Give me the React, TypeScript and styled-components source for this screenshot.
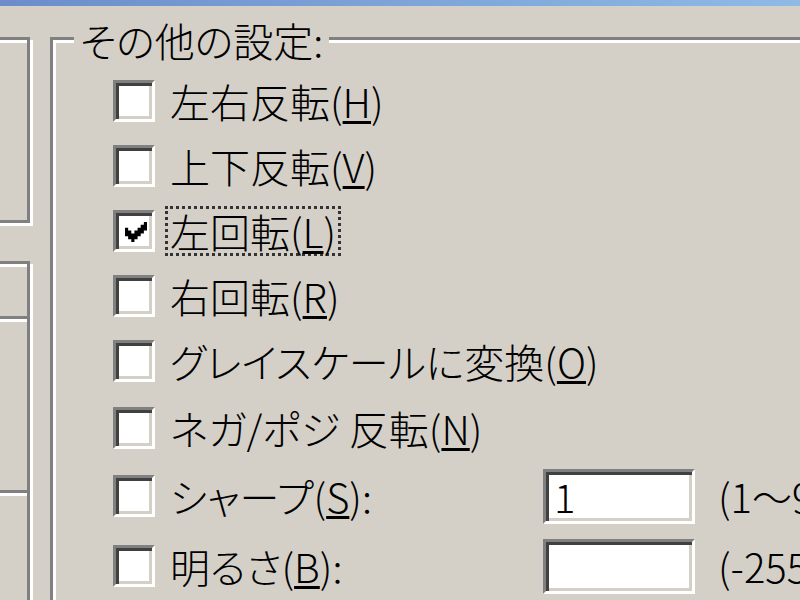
import React from "react";
import styled, { createGlobalStyle } from "styled-components";

const GlobalStyle = createGlobalStyle`
  html, body {
    margin: 0;
    padding: 0;
    background: #d4d0c8;
    overflow: hidden;
  }
  body {
    font-family: "Noto Sans CJK JP", "Noto Sans", sans-serif;
    font-weight: 300;
    font-feature-settings: "palt";
    color: #000;
  }
`;

const Window = styled.div`
  width: 800px;
  height: 600px;
  overflow: hidden;
  background: #d4d0c8;
  display: flex;
  flex-direction: column;
`;

const TitleBar = styled.div`
  height: 6px;
  flex-shrink: 0;
  background: linear-gradient(to right, #6c8dca, #8fbae6);
`;

const Body = styled.div`
  display: flex;
  gap: 17px;
  padding-top: 31px;
  flex: 1;
  min-height: 0;
`;

const LeftColumn = styled.div`
  width: 45px;
  margin-left: -12px;
  flex-shrink: 0;
  display: flex;
  flex-direction: column;
  gap: 38px;
`;

// classic etched frame: grey rect with a white rect 1px down-right
const Etched = styled.div<{ $h: number }>`
  box-sizing: border-box;
  width: 42px;
  height: ${p => p.$h}px;
  flex-shrink: 0;
  border: 3px solid #808080;
  box-shadow: inset 3px 3px 0 #fff, 3px 3px 0 #fff;
`;

const Separator = styled.div<{ $top: number }>`
  height: 3px;
  margin-top: ${p => p.$top}px;
  background: #808080;
  border-bottom: 3px solid #fff;
`;

const GroupBox = styled.div`
  position: relative;
  box-sizing: border-box;
  width: 800px;
  height: 700px;
  flex-shrink: 0;
  border: 3px solid #808080;
  box-shadow: inset 3px 3px 0 #fff;
  padding: 27px 0 0 60px;
`;

const Legend = styled.div`
  position: absolute;
  top: -20px;
  left: 21px;
  padding: 0 6px;
  background: #d4d0c8;
  font-size: 40px;
  line-height: 40px;
  white-space: nowrap;
`;

const Row = styled.div<{ $h: number }>`
  display: flex;
  align-items: center;
  height: ${p => p.$h}px;
`;

const CheckBox = styled.div`
  box-sizing: border-box;
  width: 42px;
  height: 42px;
  flex-shrink: 0;
  background: #fff;
  border: 3px solid;
  border-color: #808080 #fff #fff #808080;
  box-shadow: inset 3px 3px 0 #404040, inset -3px -3px 0 #d4d0c8;
  display: flex;
  align-items: center;
  justify-content: center;
  padding: 3px 0 0 3px;
`;

const Label = styled.div<{ $focused?: boolean; $width?: number }>`
  box-sizing: border-box;
  margin-left: 10px;
  padding: 2px 2px;
  border: 3px ${p => (p.$focused ? "dotted #333" : "solid transparent")};
  font-size: 40px;
  line-height: 40px;
  white-space: nowrap;
  flex-shrink: 0;
  width: ${p => (p.$width ? `${p.$width}px` : "auto")};
`;

const Key = styled.span`
  text-decoration: underline;
  text-decoration-thickness: 3px;
  text-underline-offset: 3px;
`;

const Edit = styled.div`
  box-sizing: border-box;
  width: 152px;
  height: 55px;
  flex-shrink: 0;
  background: #fff;
  border: 3px solid;
  border-color: #808080 #fff #fff #808080;
  box-shadow: inset 3px 3px 0 #404040, inset -3px -3px 0 #d4d0c8;
  padding: 0 8px;
  font-size: 40px;
  line-height: 49px;
`;

const Hint = styled.div`
  margin-left: 23px;
  font-size: 40px;
  line-height: 40px;
  white-space: nowrap;
`;

function Check() {
  return (
    <svg width="22" height="20" viewBox="0 0 7 7" preserveAspectRatio="none">
      <polygon
        fill="#000"
        points="6,0 7,0 7,3 6,3 6,4 5,4 5,5 4,5 4,6 3,6 3,7 2,7 2,6 1,6 1,5 0,5 0,2 1,2 1,3 2,3 2,4 3,4 3,3 4,3 4,2 5,2 5,1 6,1"
      />
    </svg>
  );
}

type Option = {
  text: string;
  key: string;
  suffix?: string;
  h: number;
  checked?: boolean;
  focused?: boolean;
  edit?: string;
  hint?: string;
};

const options: Option[] = [
  { text: "左右反転", key: "H", h: 67 },
  { text: "上下反転", key: "V", h: 63 },
  { text: "左回転", key: "L", h: 67, checked: true, focused: true },
  { text: "右回転", key: "R", h: 63 },
  { text: "グレイスケールに変換", key: "O", h: 67 },
  { text: "ネガ/ポジ 反転", key: "N", h: 67 },
  { text: "シャープ", key: "S", suffix: ":", h: 70, edit: "1", hint: "(1～99)" },
  { text: "明るさ", key: "B", suffix: ":", h: 70, edit: "", hint: "(-255～255)" },
];

export default function App() {
  return (
    <Window>
      <GlobalStyle />
      <TitleBar />
      <Body>
        <LeftColumn>
          <Etched $h={186} />
          <Etched $h={400}>
            <Separator $top={52} />
            <Separator $top={168} />
          </Etched>
        </LeftColumn>

        <GroupBox>
          <Legend>その他の設定:</Legend>
          {options.map(o => (
            <Row key={o.key} $h={o.h}>
              <CheckBox>{o.checked && <Check />}</CheckBox>
              <Label $focused={o.focused} $width={o.hint ? 378 : undefined}>
                {o.text}(<Key>{o.key}</Key>){o.suffix}
              </Label>
              {o.hint && (
                <>
                  <Edit>{o.edit}</Edit>
                  <Hint>{o.hint}</Hint>
                </>
              )}
            </Row>
          ))}
        </GroupBox>
      </Body>
    </Window>
  );
}
